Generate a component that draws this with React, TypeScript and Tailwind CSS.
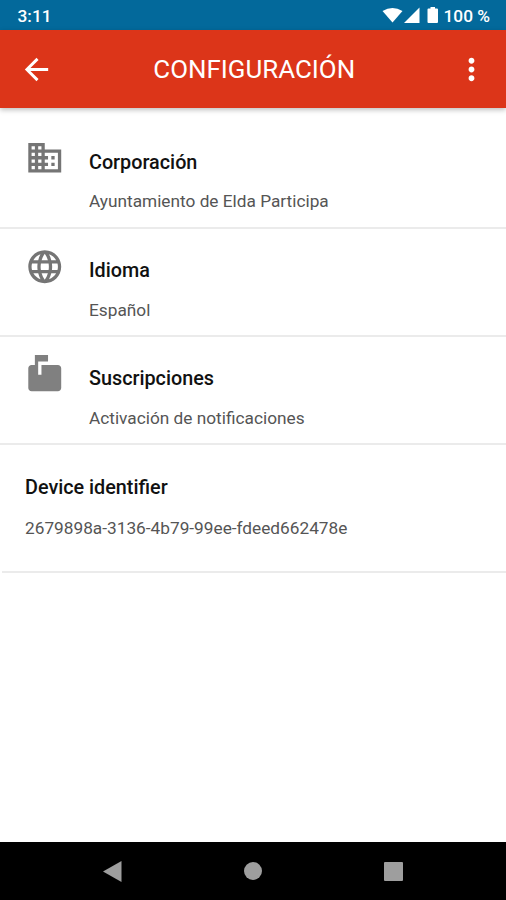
import type { ReactNode } from "react";

function Icon({ d, className }: { d: string; className: string }) {
  return (
    <svg viewBox="0 0 24 24" fill="currentColor" className={className}>
      <path d={d} />
    </svg>
  );
}

const icons = {
  back: "M20 11H7.83l5.59-5.59L12 4l-8 8 8 8 1.41-1.41L7.83 13H20v-2z",
  more: "M12 8c1.1 0 2-.9 2-2s-.9-2-2-2-2 .9-2 2 .9 2 2 2zm0 2c-1.1 0-2 .9-2 2s.9 2 2 2 2-.9 2-2-.9-2-2-2zm0 6c-1.1 0-2 .9-2 2s.9 2 2 2 2-.9 2-2-.9-2-2-2z",
  building:
    "M12 7V3H2v18h20V7H12zM6 19H4v-2h2v2zm0-4H4v-2h2v2zm0-4H4V9h2v2zm0-4H4V5h2v2zm4 12H8v-2h2v2zm0-4H8v-2h2v2zm0-4H8V9h2v2zm0-4H8V5h2v2zm10 12h-8v-2h2v-2h-2v-2h2v-2h-2V9h8v10zm-2-8h-2v2h2v-2zm0 4h-2v2h2v-2z",
  globe:
    "M11.99 2C6.47 2 2 6.48 2 12s4.47 10 9.99 10C17.52 22 22 17.52 22 12S17.52 2 11.99 2zm6.93 6h-2.95c-.32-1.25-.78-2.45-1.38-3.56 1.84.63 3.37 1.91 4.33 3.56zM12 4.04c.83 1.2 1.48 2.53 1.91 3.96h-3.82c.43-1.43 1.08-2.76 1.91-3.96zM4.26 14C4.1 13.36 4 12.69 4 12s.1-1.36.26-2h3.38c-.08.66-.14 1.32-.14 2 0 .68.06 1.34.14 2H4.26zm.82 2h2.95c.32 1.25.78 2.45 1.38 3.56-1.84-.63-3.37-1.9-4.33-3.56zm2.95-8H5.08c.96-1.66 2.49-2.93 4.33-3.56C8.81 5.55 8.35 6.75 8.03 8zM12 19.96c-.83-1.2-1.48-2.53-1.91-3.96h3.82c-.43 1.43-1.08 2.76-1.91 3.96zM14.34 14H9.66c-.09-.66-.16-1.32-.16-2 0-.68.07-1.35.16-2h4.68c.09.65.16 1.32.16 2 0 .68-.07 1.34-.16 2zm.25 5.56c.6-1.11 1.06-2.31 1.38-3.56h2.95c-.96 1.65-2.49 2.93-4.33 3.56zM16.36 14c.08-.66.14-1.32.14-2 0-.68-.06-1.34-.14-2h3.38c.16.64.26 1.31.26 2s-.1 1.36-.26 2h-3.38z",
  mailbox:
    "M20 6H10v6H8V4h6V0H6v6H4c-1.1 0-2 .9-2 2v12c0 1.1.9 2 2 2h16c1.1 0 2-.9 2-2V8c0-1.1-.9-2-2-2z",
};

function Row({ icon, title, children }: { icon: ReactNode; title: string; children: ReactNode }) {
  return (
    <div className="flex h-[108.2px] border-b-2 border-[#ebebeb] pl-[24.8px]">
      <div className="w-[64.2px] shrink-0">{icon}</div>
      <div className="pt-[30.7px]">
        <div className="text-[19.8px] leading-6 font-medium text-[#111]">{title}</div>
        <div className="mt-[14.3px] text-[17.25px] leading-6 text-[#555]">{children}</div>
      </div>
    </div>
  );
}

export default function App() {
  return (
    <div className="flex h-[900px] w-[506px] flex-col overflow-hidden bg-white font-['Roboto',sans-serif]">
      <div className="flex h-[29.5px] shrink-0 items-center bg-[#03699b] pt-[3px] pr-[16px] pl-[17.5px] text-[17.3px] font-medium text-white">
        <span className="pt-px">3:11</span>
        <svg viewBox="0 0 58 18" fill="currentColor" className="ml-auto h-[18px] w-[58px]">
          <path d="M0.5 4Q10.500-2 20.500 4L10.500 15.500Z" />
          <path d="M22 16L37.500 0.500V16Z" />
          <path d="M48.500 0h4.500v1.600h2q1 0 1 1V15q0 1-1 1h-8.500q-1 0-1-1V2.600q0-1 1-1h2Z" />
        </svg>
        <span className="ml-[4px] pt-px">100 %</span>
      </div>
      <header className="relative z-10 flex h-[78.5px] shrink-0 items-center justify-between bg-[#dc3519] pt-[1.5px] pr-[16.5px] pl-[19px] text-white shadow-[0_2px_5px_rgba(0,0,0,0.25)]">
        <Icon d={icons.back} className="size-[35px]" />
        <h1 className="text-[25.9px]">CONFIGURACIÓN</h1>
        <Icon d={icons.more} className="size-[35px]" />
      </header>
      <main className="flex-1 pt-[12.4px]">
        <Row icon={<Icon d={icons.building} className="mt-[17.5px] size-[39.5px] text-[#757575]" />} title="Corporación">
          Ayuntamiento de Elda Participa
        </Row>
        <Row icon={<Icon d={icons.globe} className="mt-[18px] size-[39.5px] text-[#757575]" />} title="Idioma">
          Español
        </Row>
        <Row icon={<Icon d={icons.mailbox} className="mt-[18px] size-[39.5px] text-[#808080]" />} title="Suscripciones">
          Activación de notificaciones
        </Row>
        <div className="ml-0.5 h-[128px] border-b-2 border-[#ebebeb] pt-[31px] pl-[23px]">
          <div className="text-[19.8px] leading-6 font-medium text-[#111]">Device identifier</div>
          <div className="mt-[16.5px] text-[17.25px] leading-6 text-[#555]">2679898a-3136-4b79-99ee-fdeed662478e</div>
        </div>
      </main>
      <nav className="flex h-[58px] shrink-0 items-center justify-between bg-black pr-[103px] pl-[103px] text-[#9e9e9e]">
        <svg viewBox="0 0 19 21" fill="currentColor" className="h-[21px] w-[19px]">
          <path d="M0 10.500L18.500 0V21Z" />
        </svg>
        <span className="size-[18px] rounded-full bg-[#9e9e9e]" />
        <span className="size-[19px] rounded-[1px] bg-[#9e9e9e]" />
      </nav>
    </div>
  );
}
